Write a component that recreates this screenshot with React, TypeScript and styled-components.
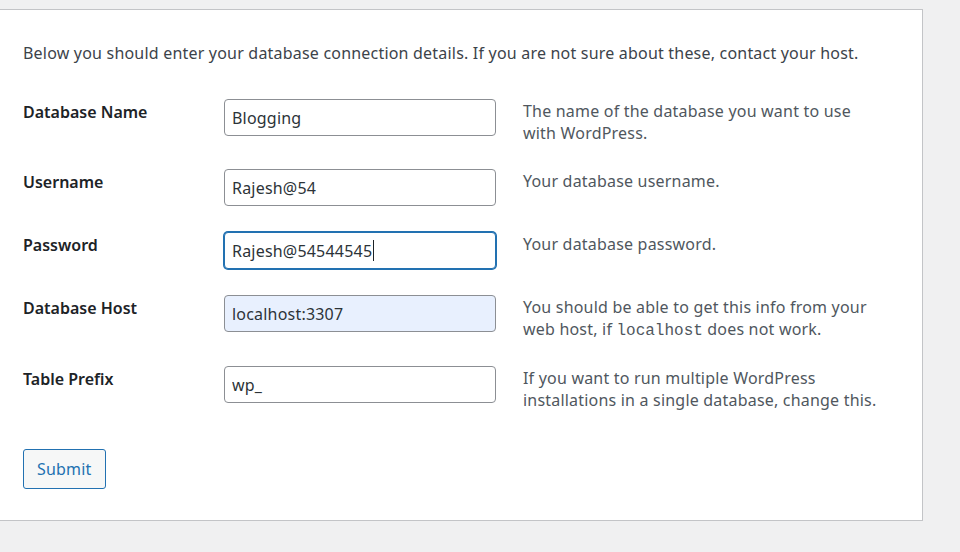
import React from "react";
import styled, { createGlobalStyle } from "styled-components";

const Global = createGlobalStyle`
  html, body { margin: 0; padding: 0; background: #f0f0f1; }
  body { font-family: "Noto Sans", "Open Sans", sans-serif; font-size: 16px; color: #3c434a; }
`;

const Page = styled.div`
  width: 960px;
  height: 552px;
  background: #f0f0f1;
  padding-top: 9px;
  box-sizing: border-box;
  overflow: hidden;
`;

const Panel = styled.div`
  width: 923px;
  box-sizing: border-box;
  background: #fff;
  border: 1px solid #c3c4c7;
  border-left: none;
  padding: 32px 0 31px 23px;
`;

const Intro = styled.p`
  margin: 0 0 35px;
  line-height: 22px;
  letter-spacing: 0.2px;
  color: #3c434a;
`;

const Row = styled.div<{ $extra?: number }>`
  display: grid;
  grid-template-columns: 201px 272px 1fr;
  align-items: start;
  padding-bottom: ${(p) => 26 + (p.$extra ?? 0)}px;
`;

const Label = styled.label`
  font-weight: 600;
  color: #1d2327;
  line-height: 22px;
  padding-top: 2px;
`;

const Input = styled.input<{ $autofill?: boolean }>`
  box-sizing: border-box;
  width: 272px;
  height: 37px;
  margin: 0;
  padding: 0 7px;
  font-family: inherit;
  font-size: 16px;
  letter-spacing: 0.2px;
  color: #2c3338;
  background: ${(p) => (p.$autofill ? "#e8f0fe" : "#fff")};
  border: 1px solid #8c8f94;
  border-radius: 4px;
  outline: none;
`;

const FocusedField = styled.div`
  box-sizing: border-box;
  width: 272px;
  height: 37px;
  padding: 0 7px;
  display: flex;
  align-items: center;
  letter-spacing: 0.2px;
  color: #2c3338;
  background: #fff;
  border: 1px solid #2271b1;
  box-shadow: 0 0 0 1px #2271b1;
  border-radius: 4px;
`;

const Caret = styled.span`
  display: inline-block;
  width: 1px;
  height: 21px;
  margin-left: 1px;
  background: #1d2327;
`;

const Desc = styled.div`
  margin-left: 27px;
  padding-top: 1px;
  margin-bottom: -1px;
  width: 358px;
  color: #50575e;
  line-height: 22px;
  letter-spacing: 0.2px;
`;

const Code = styled.code`
  font-family: "Liberation Mono", monospace;
  font-size: 16px;
  line-height: 1;
  letter-spacing: 0;
`;

const Submit = styled.button`
  display: block;
  margin-top: 13px;
  box-sizing: border-box;
  height: 40px;
  padding: 0 13px;
  font-family: inherit;
  font-size: 16px;
  letter-spacing: 0.2px;
  color: #2271b1;
  background: #f6f7f7;
  border: 1px solid #2271b1;
  border-radius: 3px;
`;

export default function App() {
  return (
    <Page>
      <Global />
      <Panel>
        <Intro>
          Below you should enter your database connection details. If you are not sure about these, contact your host.
        </Intro>
        <Row>
          <Label>Database Name</Label>
          <Input defaultValue="Blogging" />
          <Desc>The name of the database you want to use with WordPress.</Desc>
        </Row>
        <Row>
          <Label>Username</Label>
          <Input defaultValue="Rajesh@54" />
          <Desc>Your database username.</Desc>
        </Row>
        <Row>
          <Label>Password</Label>
          <FocusedField>
            Rajesh@54544545
            <Caret />
          </FocusedField>
          <Desc>Your database password.</Desc>
        </Row>
        <Row $extra={1}>
          <Label>Database Host</Label>
          <Input $autofill defaultValue="localhost:3307" />
          <Desc>
            You should be able to get this info from your web host, if <Code>localhost</Code> does not work.
          </Desc>
        </Row>
        <Row>
          <Label>Table Prefix</Label>
          <Input defaultValue="wp_" />
          <Desc>If you want to run multiple WordPress installations in a single database, change this.</Desc>
        </Row>
        <Submit>Submit</Submit>
      </Panel>
    </Page>
  );
}
